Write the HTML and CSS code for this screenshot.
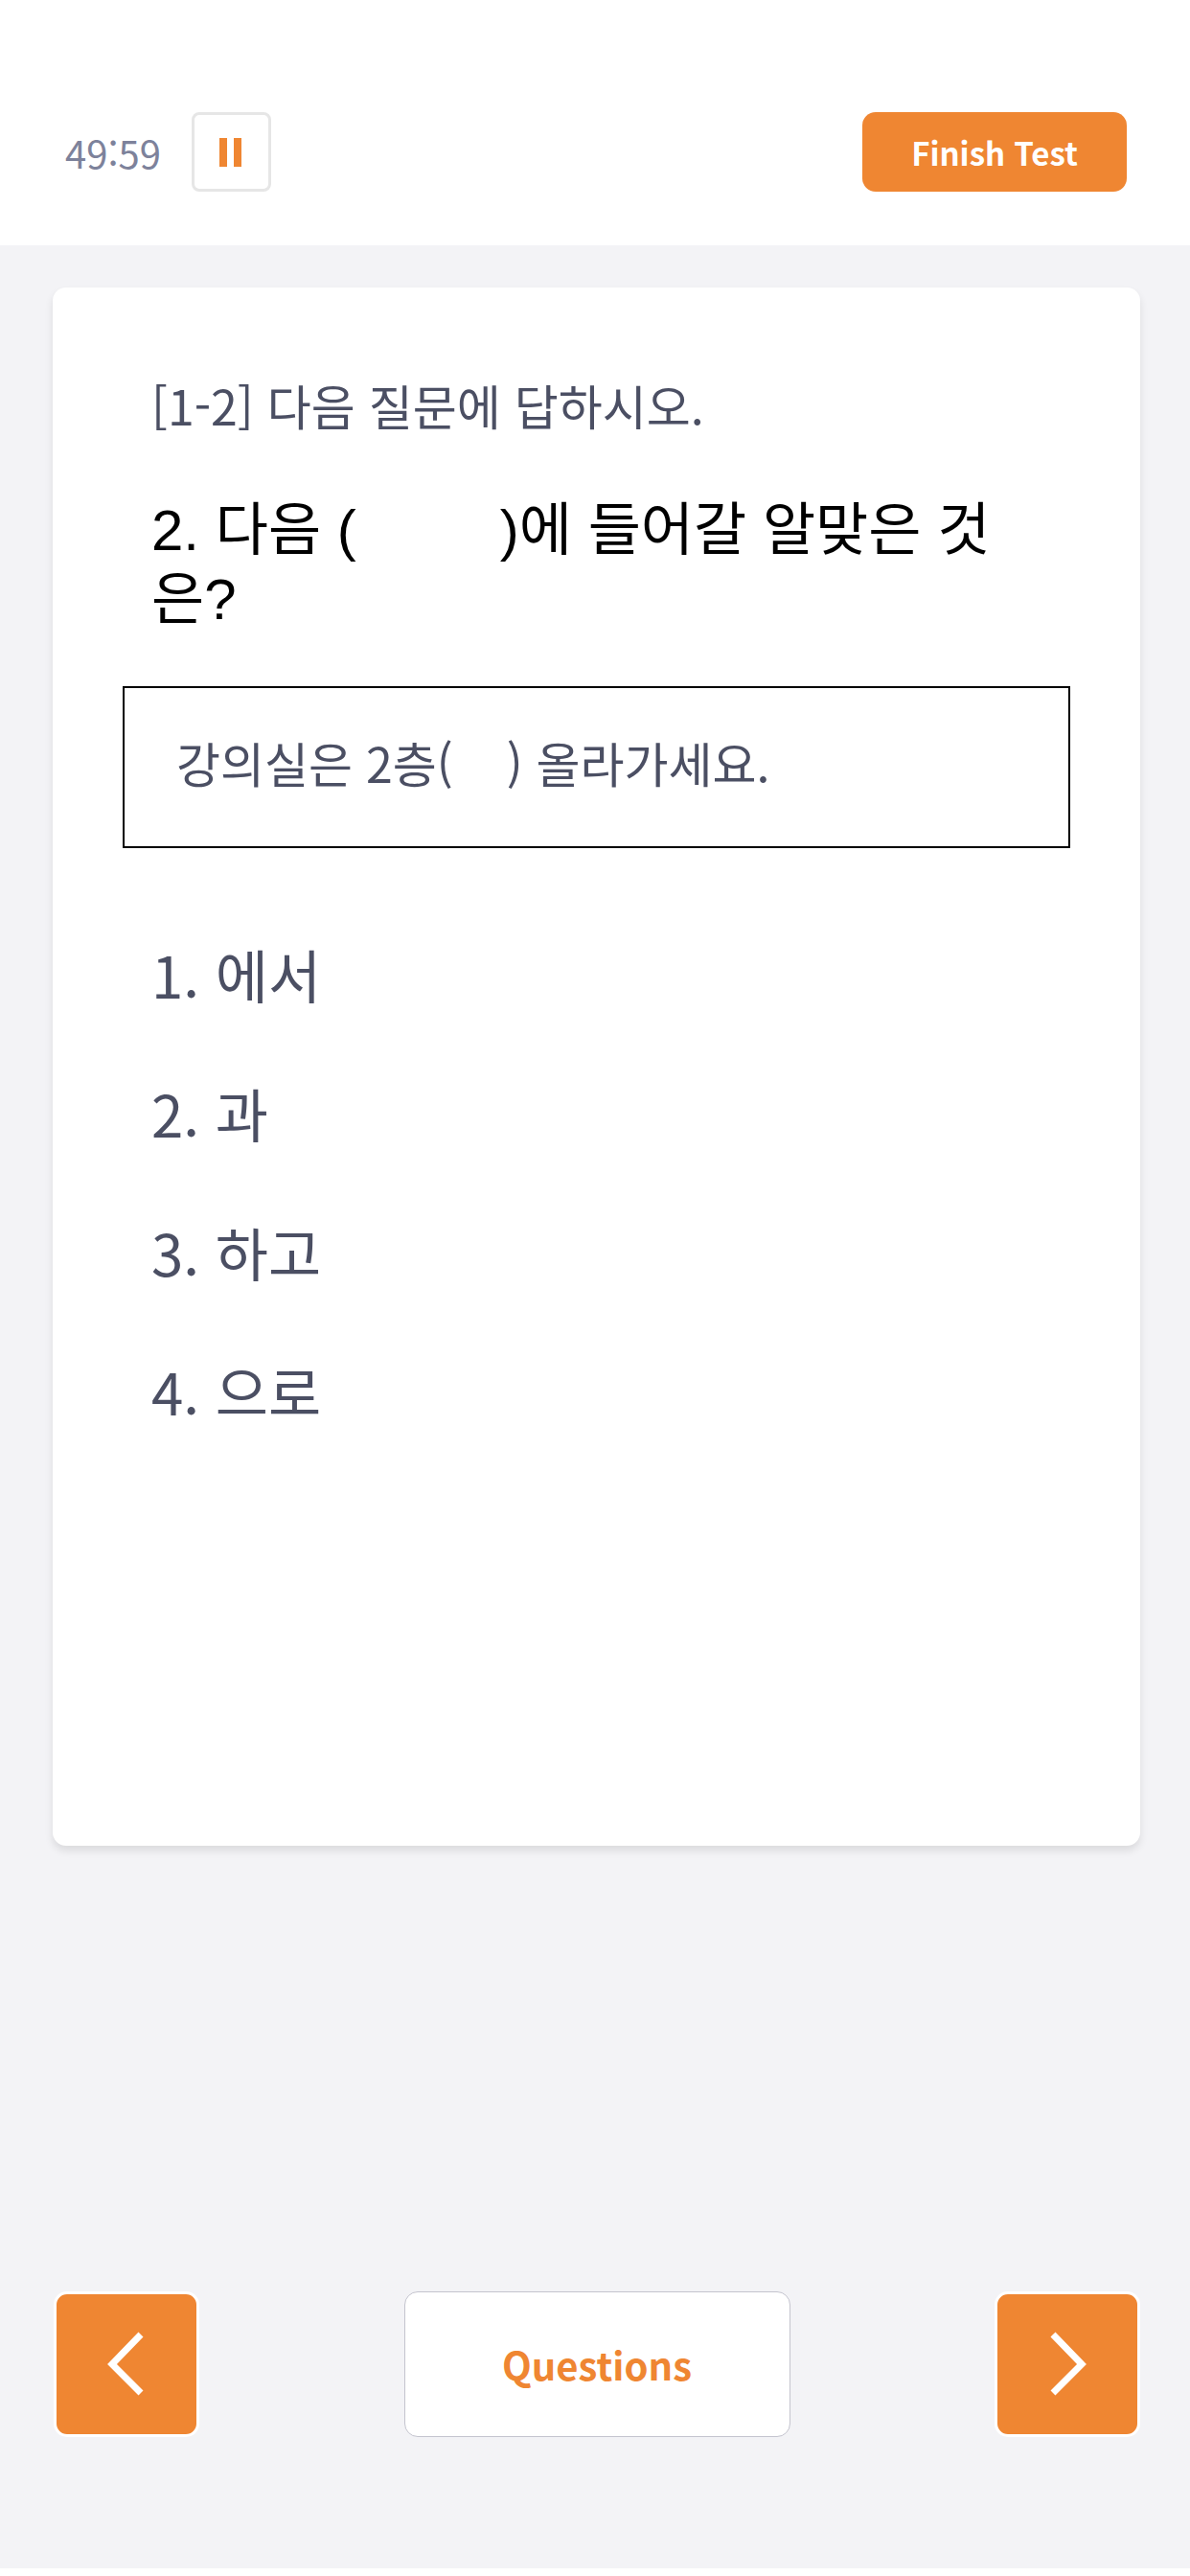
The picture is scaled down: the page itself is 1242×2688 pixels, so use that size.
FILE: index.html
```html
<!DOCTYPE html>
<html lang="ko">
<head>
	<meta charset="UTF-8">
	<meta name="viewport" content="width=device-width, initial-scale=1">
	<title>Test</title>
	<link rel="stylesheet" href="styles.css">
</head>
<body>
	<div class="screen">
		<header class="header">
			<span class="timer">49:59</span>
			<button class="pause" type="button" aria-label="Pause">
				<svg width="24" height="30" viewBox="0 0 24 30">
					<rect x="0" y="0" width="8" height="30"/>
					<rect x="15" y="0" width="8" height="30"/>
				</svg>
			</button>
			<button class="finish" type="button">Finish Test</button>
		</header>
		<main class="card">
			<p class="guide">[1-2] 다음 질문에 답하시오.</p>
			<h1 class="question">2. 다음 (&nbsp;&nbsp;&nbsp;&nbsp;&nbsp;&nbsp;&nbsp;&nbsp;&nbsp;)에 들어갈 알맞은 것은?</h1>
			<p class="example">강의실은 2층(&nbsp;&nbsp;&nbsp;&nbsp;) 올라가세요.</p>
			<ul class="answers">
				<li><button type="button">1. 에서</button></li>
				<li><button type="button">2. 과</button></li>
				<li><button type="button">3. 하고</button></li>
				<li><button type="button">4. 으로</button></li>
			</ul>
		</main>
		<nav class="footer">
			<button class="arrow" type="button" aria-label="Previous">
				<svg width="146" height="146" viewBox="0 0 146 146">
					<polyline points="88,42 58,73 88,103"/>
				</svg>
			</button>
			<button class="questions" type="button">Questions</button>
			<button class="arrow" type="button" aria-label="Next">
				<svg width="146" height="146" viewBox="0 0 146 146">
					<polyline points="58,42 88,73 58,103"/>
				</svg>
			</button>
		</nav>
	</div>
</body>
</html>
```
FILE: styles.css
```css
*{
	margin: 0;
	padding: 0;
	box-sizing: border-box;
}
body{
	background: #fff;
	color: #4b4f63;
	font-family: "Noto Sans CJK KR", sans-serif;
	padding-bottom: 8px;
}
ul{
	list-style: none;
}
button{
	font-family: inherit;
	border: none;
	background: none;
	color: inherit;
	cursor: pointer;
}
svg{
	display: block;
}
.screen{
	min-height: calc(100vh - 8px);
	display: flex;
	flex-direction: column;
	background: #f3f3f6;
}
.header{
	display: flex;
	align-items: center;
	padding: 117px 66px 56px 68px;
	background: #fff;
}
.timer{
	font-size: 40px;
	line-height: 60px;
	color: #7d829b;
}
.pause{
	width: 83px;
	height: 83px;
	margin-left: 32px;
	border: 3px solid #e6e6e6;
	border-radius: 8px;
	display: flex;
	align-items: center;
	justify-content: center;
}
.pause svg{
	fill: #ef8632;
}
.finish{
	width: 276px;
	height: 83px;
	margin-left: auto;
	border-radius: 14px;
	background: #ef8632;
	color: #fff;
	font-size: 33px;
	font-weight: bold;
}
.card{
	flex: 1;
	margin: 44px 52px 0 55px;
	padding: 86px 73px;
	border-radius: 14px;
	background: #fff;
	box-shadow: 0 5px 9px rgba(0,0,0,0.1);
}
.guide{
	padding: 0 30px;
	font-size: 50px;
	line-height: 72px;
}
.question{
	margin-top: 60px;
	padding: 0 30px;
	font-family: "Liberation Sans", "Noto Sans CJK KR", sans-serif;
	font-size: 60px;
	font-weight: normal;
	line-height: 72px;
	color: #000;
}
.example{
	margin-top: 54px;
	padding: 41px 54px 52px;
	border: 2px solid #000;
	font-size: 50px;
	line-height: 72px;
}
.answers{
	margin-top: 95px;
	padding: 0 30px;
	display: flex;
	flex-direction: column;
	gap: 73px;
}
.answers button{
	display: block;
	width: 100%;
	font-size: 60px;
	line-height: 72px;
	text-align: left;
}
.footer{
	display: flex;
	align-items: center;
	justify-content: space-between;
	margin-top: 465px;
	padding: 0 52px 137px 56px;
}
.arrow{
	width: 152px;
	height: 152px;
	border: 3px solid #fff;
	border-radius: 14px;
	background: #ef8632;
}
.arrow svg{
	fill: none;
	stroke: #fff;
	stroke-width: 7;
}
.questions{
	width: 403px;
	height: 152px;
	border: 1px solid #c4c4ce;
	border-radius: 14px;
	background: #fff;
	color: #ef8632;
	font-size: 40px;
	font-weight: bold;
}
```
